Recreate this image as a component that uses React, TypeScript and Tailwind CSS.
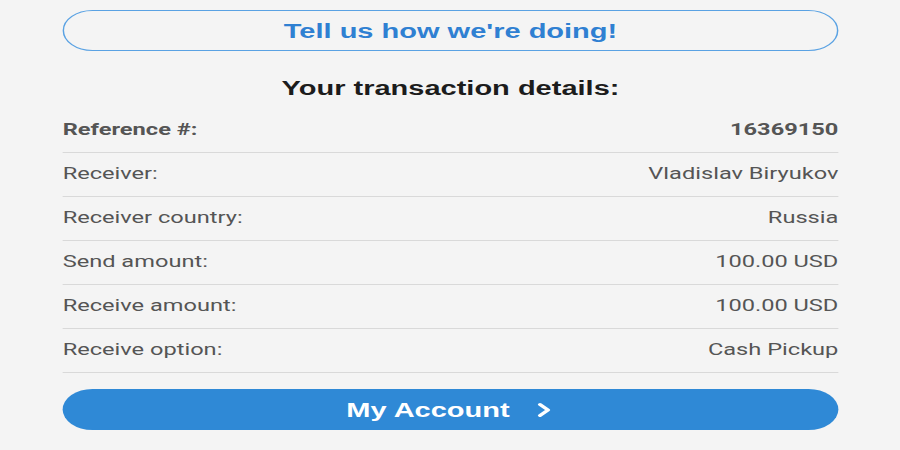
import { ChevronRight } from 'lucide-react';

const rows = [
    { label: 'Reference #:', value: '16369150', strong: true },
    { label: 'Receiver:', value: 'Vladislav Biryukov' },
    { label: 'Receiver country:', value: 'Russia' },
    { label: 'Send amount:', value: '100.00 USD' },
    { label: 'Receive amount:', value: '100.00 USD' },
    { label: 'Receive option:', value: 'Cash Pickup' },
];

function DetailRow({
    label,
    value,
    strong,
}: {
    label: string;
    value: string;
    strong?: boolean;
}) {
    return (
        <li
            className={`flex h-[44px] items-center justify-between border-b border-[#d9d9d9] text-[16.3px] text-[#555] ${
                strong ? 'font-bold' : ''
            }`}
        >
            <span>{label}</span>
            <span>{value}</span>
        </li>
    );
}

export default function App() {
    return (
        <div className="min-h-[450px] overflow-hidden bg-[#f4f4f4] font-['Roboto',sans-serif]">
            {/* the source page is drawn stretched wide, so the column is scaled on x */}
            <div className="mx-auto w-[535px] scale-x-[1.45] pt-[10px]">
                <button className="flex h-[41px] w-full items-center justify-center rounded-full border-[1.5px] border-[#5aa2e3] font-['Liberation_Sans',Arial,sans-serif] text-[20px] font-bold text-[#2f80d2]">
                    Tell us how we're doing!
                </button>
                <h2 className="mt-[23px] h-[28px] text-center font-['Liberation_Sans',Arial,sans-serif] text-[20px] font-bold leading-[28px] text-[#1c1c1c]">
                    Your transaction details:
                </h2>
                <ul className="mt-[7px]">
                    {rows.map((row) => (
                        <DetailRow key={row.label} {...row} />
                    ))}
                </ul>
                <button className="mt-[16px] flex h-[41px] w-full items-center justify-center gap-[13px] rounded-full bg-[#2f89d6] font-['Liberation_Sans',Arial,sans-serif] text-[20px] font-bold text-white">
                    <span className="pl-[4px]">My Account</span>
                    <ChevronRight size={22} strokeWidth={3.2} />
                </button>
            </div>
        </div>
    );
}
